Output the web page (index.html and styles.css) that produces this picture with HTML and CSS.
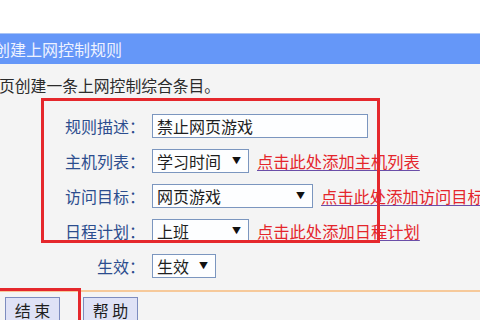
FILE: index.html
```html
<!DOCTYPE html>
<html lang="zh-CN">
<head>
<meta charset="utf-8">
<link rel="stylesheet" href="styles.css">
</head>
<body>
<div class="page">
  <div class="top"></div>
  <div class="titlebar"><span class="title">创建上网控制规则</span></div>
  <div class="intro">页创建一条上网控制综合条目。</div>
  <div class="form">
    <div class="row">
      <span class="label">规则描述：</span>
      <span class="field"><span class="input">禁止网页游戏</span></span>
    </div>
    <div class="row">
      <span class="label">主机列表：</span>
      <span class="field"><span class="select w97">学习时间<i class="arrow">▼</i></span><a class="link">点击此处添加主机列表</a></span>
    </div>
    <div class="row">
      <span class="label">访问目标：</span>
      <span class="field"><span class="select w161">网页游戏<i class="arrow">▼</i></span><a class="link">点击此处添加访问目标</a></span>
    </div>
    <div class="row">
      <span class="label">日程计划：</span>
      <span class="field"><span class="select w97">上班<i class="arrow">▼</i></span><a class="link">点击此处添加日程计划</a></span>
    </div>
    <div class="row">
      <span class="label">生效：</span>
      <span class="field"><span class="select w64">生效<i class="arrow">▼</i></span></span>
    </div>
  </div>
  <div class="divider"></div>
  <div class="buttons">
    <span class="btn">结 束</span>
    <span class="btn help">帮 助</span>
  </div>
  <div class="mark mark-form"></div>
  <div class="mark mark-btn"></div>
</div>
</body>
</html>
```
FILE: styles.css
```css
html, body {
  margin: 0;
  padding: 0;
}
body {
  width: 480px;
  height: 320px;
  overflow: hidden;
  background: #f4f4f4;
  font-family: "Noto Sans CJK SC", "Noto Sans", sans-serif;
  font-size: 16px;
}
.page {
  position: relative;
  width: 480px;
  height: 320px;
  overflow: hidden;
}
.top {
  height: 33px;
  background: #ffffff;
}
.titlebar {
  height: 31px;
  background: #6597f8;
  border-top: 1px solid #a9c4f5;
  box-sizing: border-box;
  display: flex;
  align-items: center;
  overflow: hidden;
}
.title {
  margin-left: -6px;
  color: #eef2ff;
  font-size: 16px;
  line-height: 20px;
  white-space: nowrap;
}
.intro {
  margin-top: 12px;
  margin-left: -1px;
  line-height: 20px;
  height: 20px;
  color: #2b2b2b;
  font-size: 15.8px;
  white-space: nowrap;
}
.form {
  margin-top: 18px;
  display: flex;
  flex-direction: column;
  gap: 11px;
}
.row {
  display: grid;
  grid-template-columns: 145px auto;
  column-gap: 7px;
  height: 24px;
  align-items: center;
}
.label {
  text-align: right;
  color: #2c4d8e;
  white-space: nowrap;
  line-height: 24px;
}
.field {
  display: flex;
  align-items: center;
  white-space: nowrap;
}
.input, .select {
  box-sizing: border-box;
  height: 24px;
  border: 1px solid #7b96bf;
  background: #fdfeff;
  color: #1e1e1e;
  line-height: 22px;
  padding-left: 4px;
  white-space: nowrap;
}
.input {
  width: 216px;
}
.select {
  position: relative;
  display: inline-block;
}
.w97 { width: 97px; }
.w161 { width: 161px; }
.w64 { width: 64px; }
.arrow {
  position: absolute;
  right: 7px;
  top: 0;
  font-style: normal;
  font-size: 9px;
  color: #111;
}
.link {
  margin-left: 8px;
  color: #e4262c;
  text-decoration: underline;
  text-decoration-color: #6a4ea8;
  text-underline-offset: 2px;
  font-size: 16.3px;
  white-space: nowrap;
}
.divider {
  margin-top: 12px;
  height: 2px;
  background: #f6c99a;
}
.buttons {
  margin-top: 5px;
  display: flex;
  gap: 23px;
  padding-left: 5px;
}
.btn {
  box-sizing: border-box;
  width: 55px;
  height: 26px;
  border: 1px solid #7d8cbf;
  background: #dfe2f6;
  color: #1e1e1e;
  text-align: center;
  line-height: 24px;
}
.mark {
  position: absolute;
  border: 3px solid #e5272c;
  box-sizing: border-box;
  pointer-events: none;
}
.mark-form {
  left: 41px;
  top: 98px;
  width: 339px;
  height: 145px;
}
.mark-btn {
  left: -10px;
  top: 288px;
  width: 91px;
  height: 60px;
}
```
